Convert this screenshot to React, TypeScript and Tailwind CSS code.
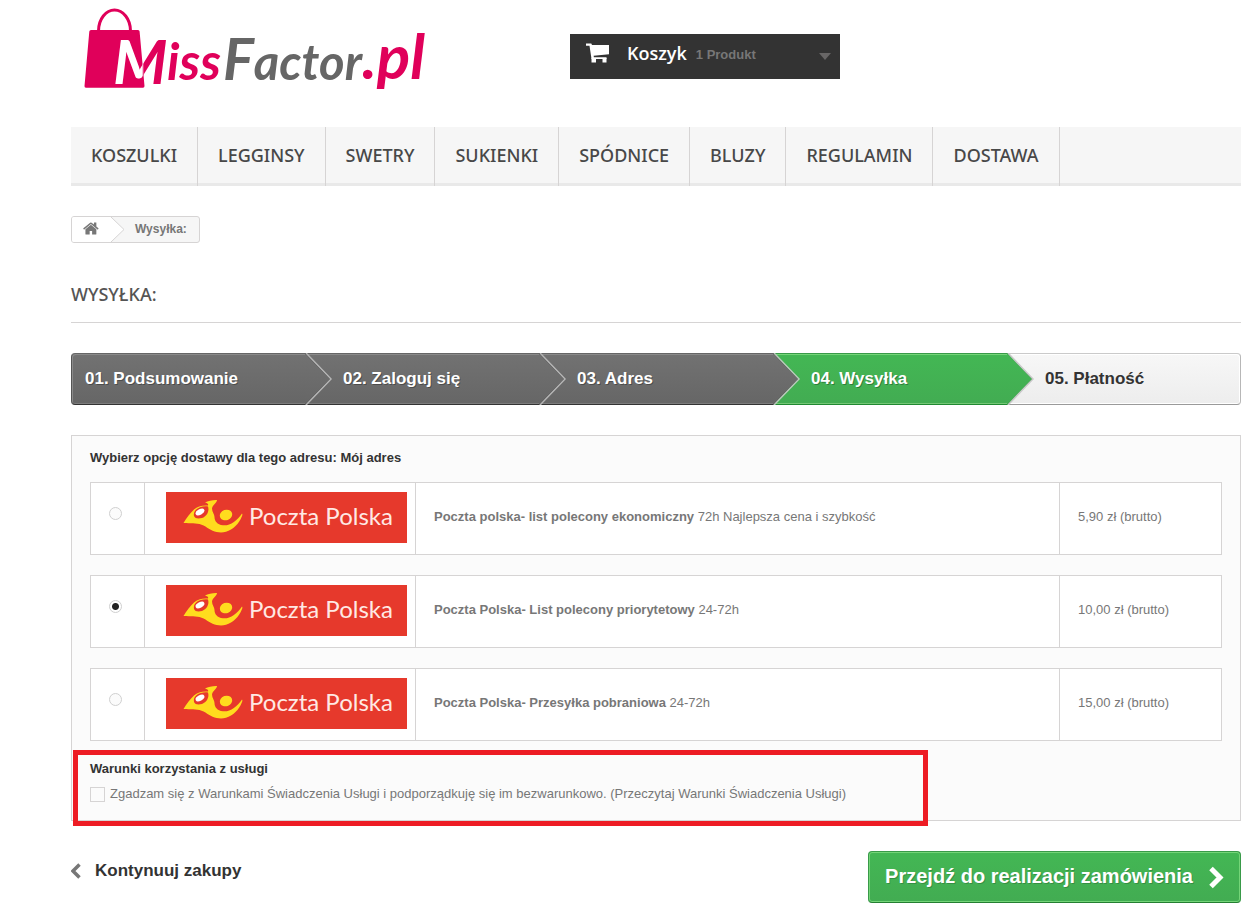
type NavItem = {
  href: string;
  label: string;
};

type Carrier = {
  id: string;
  name: string;
  delay: string;
  price: string;
};

const navItems: readonly NavItem[] = [
  { href: "#koszulki", label: "KOSZULKI" },
  { href: "#legginsy", label: "LEGGINSY" },
  { href: "#swetry", label: "SWETRY" },
  { href: "#sukienki", label: "SUKIENKI" },
  { href: "#spodnice", label: "SPÓDNICE" },
  { href: "#bluzy", label: "BLUZY" },
  { href: "#regulamin", label: "REGULAMIN" },
  { href: "#dostawa", label: "DOSTAWA" },
];

const carriers: readonly Carrier[] = [
  {
    id: "ekonomiczny",
    name: "Poczta polska- list polecony ekonomiczny",
    delay: "72h Najlepsza cena i szybkość",
    price: "5,90 zł (brutto)",
  },
  {
    id: "priorytetowy",
    name: "Poczta Polska- List polecony priorytetowy",
    delay: "24-72h",
    price: "10,00 zł (brutto)",
  },
  {
    id: "pobraniowa",
    name: "Poczta Polska- Przesyłka pobraniowa",
    delay: "24-72h",
    price: "15,00 zł (brutto)",
  },
];

function Logo() {
  return (
    <svg
      width="360"
      height="110"
      viewBox="80 5 360 110"
      fontFamily="Lato, sans-serif"
      fontStyle="italic"
      fontWeight="700"
    >
      <defs>
        <linearGradient id="m-fill" gradientUnits="userSpaceOnUse" x1="142" y1="0" x2="144" y2="0">
          <stop offset="0" stopColor="#fff" />
          <stop offset="1" stopColor="#e0005a" />
        </linearGradient>
      </defs>
      <path d="M98.500 31C98.500 19 106 10 114.500 10S130.500 19 130.500 31" fill="none" stroke="#e0005a" strokeWidth="3" />
      <path d="M91 30h47q1.500 0 1.600 1.500L144.500 86q0 1.700-1.500 1.700H86q-1.700 0-1.500-1.700L89.300 31.500Q89.500 30 91 30z" fill="#e0005a" />
      <text x="113" y="84" fontSize="62" fill="url(#m-fill)">
        M
      </text>
      <text x="167" y="80" fontSize="51" fill="#e0005a">
        iss
      </text>
      <text x="223" y="80" fontSize="49" fill="#666">
        <tspan fontSize="58">F</tspan>actor
      </text>
      <text x="362" y="79" fontSize="62" fill="#e0005a">
        .pl
      </text>
    </svg>
  );
}

function CartIcon() {
  return (
    <svg width="24" height="20" viewBox="0 0 24 20" fill="#fff" className="mb-2">
      <path d="M0 .500h5.300l.7 1.500H23v9.200L7.600 12.700l.3 1.500H20.500v1.800H5.500L3.500 2.800H0z" />
      <path d="M5.500 15h4.500v4.500H5.500zM16.500 15h4v4.500h-4z" />
    </svg>
  );
}

function HomeIcon() {
  return (
    <svg width="17" height="17" viewBox="0 0 1792 1792" fill="#777">
      <path d="M1408 992v480q0 26-19 45t-45 19h-384v-384h-256v384h-384q-26 0-45-19t-19-45v-480q0-1 .5-3t.5-3l575-474 575 474q1 2 1 6zm223-69l-62 74q-8 9-21 11h-3q-13 0-21-7l-692-577-692 577q-12 8-24 7-13-2-21-11l-62-74q-8-10-7-23.500t11-21.500l719-599q32-26 76-26t76 26l244 204v-195q0-14 9-23t23-9h192q14 0 23 9t9 23v408l219 182q10 8 11 21.500t-7 23.500z" />
    </svg>
  );
}

function PocztaPolska() {
  return (
    <svg width="241" height="51" viewBox="0 0 241 51" className="block">
      <rect width="241" height="51" fill="#e6392c" />
      <path
        d="M17.500 31C20.500 26 24 21 28 17.500C31.500 14.500 36 13 42 13.500C43 12 40.500 10.800 39 10.500C42 8.800 47 7.800 51 8C51 11 46.500 13 46 16.500C46 20 48.500 22 48.500 25C48.500 29 51 32.500 57 33.300C64 34 71 29 76 21.500C76.500 22 76.500 23 76 24C73 32 67 37.500 60 39.800C52 42 45 38.500 39.500 34.500C33 30 24 31.500 17.500 31Z"
        fill="#ffdc1e"
      />
      <path d="M28 24C26.500 18 34 13.500 42 14.500C43.500 19 41 24 36 26C32 27 29 26.500 28 24Z" fill="#e6392c" />
      <ellipse cx="34" cy="20" rx="4.800" ry="2.700" transform="rotate(-28 34 20)" fill="#fff" />
      <ellipse cx="60" cy="23" rx="6.300" ry="5.200" transform="rotate(-20 60 23)" fill="#ffdc1e" />
      <text x="83" y="33" fontSize="24" fill="#ffe9e4" fontFamily="Lato, sans-serif" fontWeight="400">
        Poczta Polska
      </text>
    </svg>
  );
}

type ArrowProps = {
  fill: "gray" | "green";
  light: string;
};

function StepArrow({ fill, light }: ArrowProps) {
  const top = fill === "gray" ? "#727272" : "#43b754";
  const bottom = fill === "gray" ? "#666" : "#42ac52";
  return (
    <svg width="30" height="52" viewBox="0 0 30 52" className="absolute -top-px left-full z-10">
      <defs>
        <linearGradient id={`step-${fill}`} x1="0" y1="0" x2="0" y2="1">
          <stop offset="0" stopColor={top} />
          <stop offset="1" stopColor={bottom} />
        </linearGradient>
      </defs>
      <path d="M0 0L25 26L0 52z" fill={`url(#step-${fill})`} />
      <path d="M0 0L25 26L0 52" fill="none" stroke={fill === "gray" ? "#4d4d4d" : "#3a9c49"} />
      <path d="M1 0L26 26L1 52" fill="none" stroke={light} strokeWidth="1.500" />
    </svg>
  );
}

const doneStep =
  "relative flex h-13 items-center border-t border-b border-t-[#666] border-b-[#333] bg-linear-to-b from-[#727272] to-[#666] pl-[38px] text-white shadow-[inset_0_1px_#8a8a8a,inset_0_-1px_#7c7c7c] [text-shadow:1px_1px_rgba(0,0,0,0.3)]";

function Steps() {
  return (
    <ol className="mt-[30px] grid grid-cols-5 text-[17px] leading-[22px] font-bold">
      <li className="relative flex h-13 items-center rounded-l-[4px] border border-r-0 border-t-[#666] border-b-[#333] border-l-[#555] bg-linear-to-b from-[#727272] to-[#666] pl-[13px] text-white shadow-[inset_1px_1px_#8a8a8a,inset_0_-1px_#7c7c7c] [text-shadow:1px_1px_rgba(0,0,0,0.3)]">
        <a href="#podsumowanie">01. Podsumowanie</a>
        <StepArrow fill="gray" light="#b5b5b5" />
      </li>
      <li className={doneStep}>
        <a href="#logowanie">02. Zaloguj się</a>
        <StepArrow fill="gray" light="#b5b5b5" />
      </li>
      <li className={doneStep}>
        <a href="#adres">03. Adres</a>
        <StepArrow fill="gray" light="#b9c9bb" />
      </li>
      <li
        aria-current="step"
        className="relative flex h-13 items-center border-t border-b border-t-[#399a49] border-b-[#208931] bg-linear-to-b from-[#43b754] to-[#42ac52] pl-[38px] text-white shadow-[inset_0_1px_#74d578,inset_0_-1px_#74c776] [text-shadow:1px_1px_rgba(0,0,0,0.3)]"
      >
        <span>04. Wysyłka</span>
        <StepArrow fill="green" light="#c9c9c9" />
      </li>
      <li className="flex h-13 items-center rounded-r-[4px] border border-l-0 border-t-[#cacaca] border-r-[#b7b7b7] border-b-[#9a9a9a] bg-linear-to-b from-[#f7f7f7] to-[#ededed] pl-[38px] text-[#333] shadow-[inset_-1px_1px_#fff,inset_0_-1px_#fff]">
        <span>05. Płatność</span>
      </li>
    </ol>
  );
}

function CarrierRow({ carrier, selected }: { carrier: Carrier; selected: boolean }) {
  return (
    <table className="h-[73px] w-full table-fixed border-collapse bg-white">
      <tbody>
        <tr>
          <td className="w-[54px] border border-[#d6d4d4] pr-1 pb-3 text-center">
            <input
              type="radio"
              name="carrier"
              id={carrier.id}
              defaultChecked={selected}
              className="inline-block size-[13px] appearance-none rounded-full border border-[#d0d0d0] bg-[#fbfbfb] align-middle checked:bg-[radial-gradient(circle,#222_0_3px,#fff_4px)]"
            />
          </td>
          <td className="w-[271px] border border-[#d6d4d4] pb-0.5 pl-[21px]">
            <label htmlFor={carrier.id}>
              <PocztaPolska />
            </label>
          </td>
          <td className="border border-[#d6d4d4] pb-1 pl-[18px]">
            <strong>{carrier.name}</strong> {carrier.delay}
          </td>
          <td className="w-[162px] border border-[#d6d4d4] pb-1 pl-[18px]">{carrier.price}</td>
        </tr>
      </tbody>
    </table>
  );
}

export default function App() {
  return (
    <div className="bg-white pr-1.5 pb-4 pl-[71px] font-['Liberation_Sans',Arial,sans-serif] text-[13px] leading-[18px] text-[#777]">
      <header className="flex h-[127px] items-start">
        <a href="#home" aria-label="MissFactor.pl" className="mt-[5px] ml-[9px] shrink-0">
          <Logo />
        </a>
        <a
          href="#koszyk"
          className="mt-[34px] ml-[130px] flex h-[45px] w-[270px] items-center bg-[#333] pr-[9px] pl-4 font-bold text-[#777]"
        >
          <CartIcon />
          <span className="mr-[9px] ml-[17px] pb-2 font-['Open_Sans',sans-serif] text-lg font-semibold text-white">
            Koszyk
          </span>
          <span className="pb-1">1 Produkt</span>
          <svg width="12" height="7" viewBox="0 0 12 7" className="ml-auto">
            <path d="M0 0h12L6 7z" fill="#686666" />
          </svg>
        </a>
      </header>

      <nav className="border-b-[3px] border-[#e9e9e9] bg-[#f6f6f6]">
        <ul className="-mb-[3px] flex">
          {navItems.map((item) => (
            <li key={item.href} className="border-r border-[#d6d4d4]">
              <a
                href={item.href}
                className="block px-5 pt-[17px] pb-5 font-['Noto_Sans','Open_Sans',sans-serif] text-lg leading-[22px] font-medium text-[#484848]"
              >
                {item.label}
              </a>
            </li>
          ))}
        </ul>
      </nav>

      <div className="mt-[30px] inline-flex h-[27px] items-center overflow-hidden rounded-[3px] border border-[#d6d4d4] bg-[#f6f6f6] pr-3 text-xs font-bold">
        <a href="#home" aria-label="Strona główna" className="flex h-full w-[39px] items-center bg-white pb-0.5 pl-[11px]">
          <HomeIcon />
        </a>
        <svg width="14" height="25" viewBox="0 0 14 25" className="mr-[10px]">
          <path d="M0 0L13 12.500L0 25" fill="#fff" stroke="#d6d4d4" />
        </svg>
        <span className="pb-0.5">Wysyłka:</span>
      </div>

      <h1 className="mt-10 border-b border-[#d6d4d4] pb-[17px] font-['Noto_Sans','Open_Sans',sans-serif] text-lg leading-[22px] font-medium text-[#555454]">
        WYSYŁKA:
      </h1>

      <Steps />

      <form>
        <div className="mt-[30px] border border-[#d6d4d4] bg-[#fbfbfb] px-[18px] pt-[13px] pb-[17px]">
          <p className="mb-[15px] font-bold text-[#333]">Wybierz opcję dostawy dla tego adresu: Mój adres</p>
          <div className="grid gap-5">
            {carriers.map((carrier) => (
              <CarrierRow key={carrier.id} carrier={carrier} selected={carrier.id === "priorytetowy"} />
            ))}
          </div>
          <div className="relative mt-[19px]">
            <p className="font-bold text-[#333]">Warunki korzystania z usługi</p>
            <div className="mt-[7px] flex items-center gap-[5px]">
              <input
                type="checkbox"
                id="cgv"
                className="size-[15px] shrink-0 appearance-none border border-[#d6d4d4] bg-[#fbfbfb] checked:bg-[#777]"
              />
              <label htmlFor="cgv">
                Zgadzam się z Warunkami Świadczenia Usługi i podporządkuję się im bezwarunkowo.{" "}
                <a href="#warunki">(Przeczytaj Warunki Świadczenia Usługi)</a>
              </label>
            </div>
            <div className="pointer-events-none absolute -top-[10px] -left-[17px] h-[76px] w-[855px] border-[5px] border-[#ed1c24]" />
          </div>
        </div>

        <div className="mt-[30px] flex items-start justify-between">
          <a href="#home" className="mt-[9px] flex items-center gap-3.5 text-[17px] leading-[22px] font-bold text-[#333]">
            <svg width="10" height="16" viewBox="0 0 10 16">
              <path d="M8.500 1.500L2 8L8.500 14.500" fill="none" stroke="#777" strokeWidth="3.500" />
            </svg>
            Kontynuuj zakupy
          </a>
          <button
            type="submit"
            className="flex h-13 items-center gap-4 rounded-[4px] border border-[#399a49] border-b-[#247f32] bg-linear-to-b from-[#43b754] to-[#42ac52] px-4 text-xl font-bold text-white shadow-[inset_0_0_0_1px_#74d578] [text-shadow:1px_1px_rgba(0,0,0,0.2)]"
          >
            <span className="pb-0.5">Przejdź do realizacji zamówienia</span>
            <svg width="15" height="23" viewBox="0 0 15 23">
              <path d="M2 2.500L11 11.500L2 20.500" fill="none" stroke="#fff" strokeWidth="5" />
            </svg>
          </button>
        </div>
      </form>
    </div>
  );
}
